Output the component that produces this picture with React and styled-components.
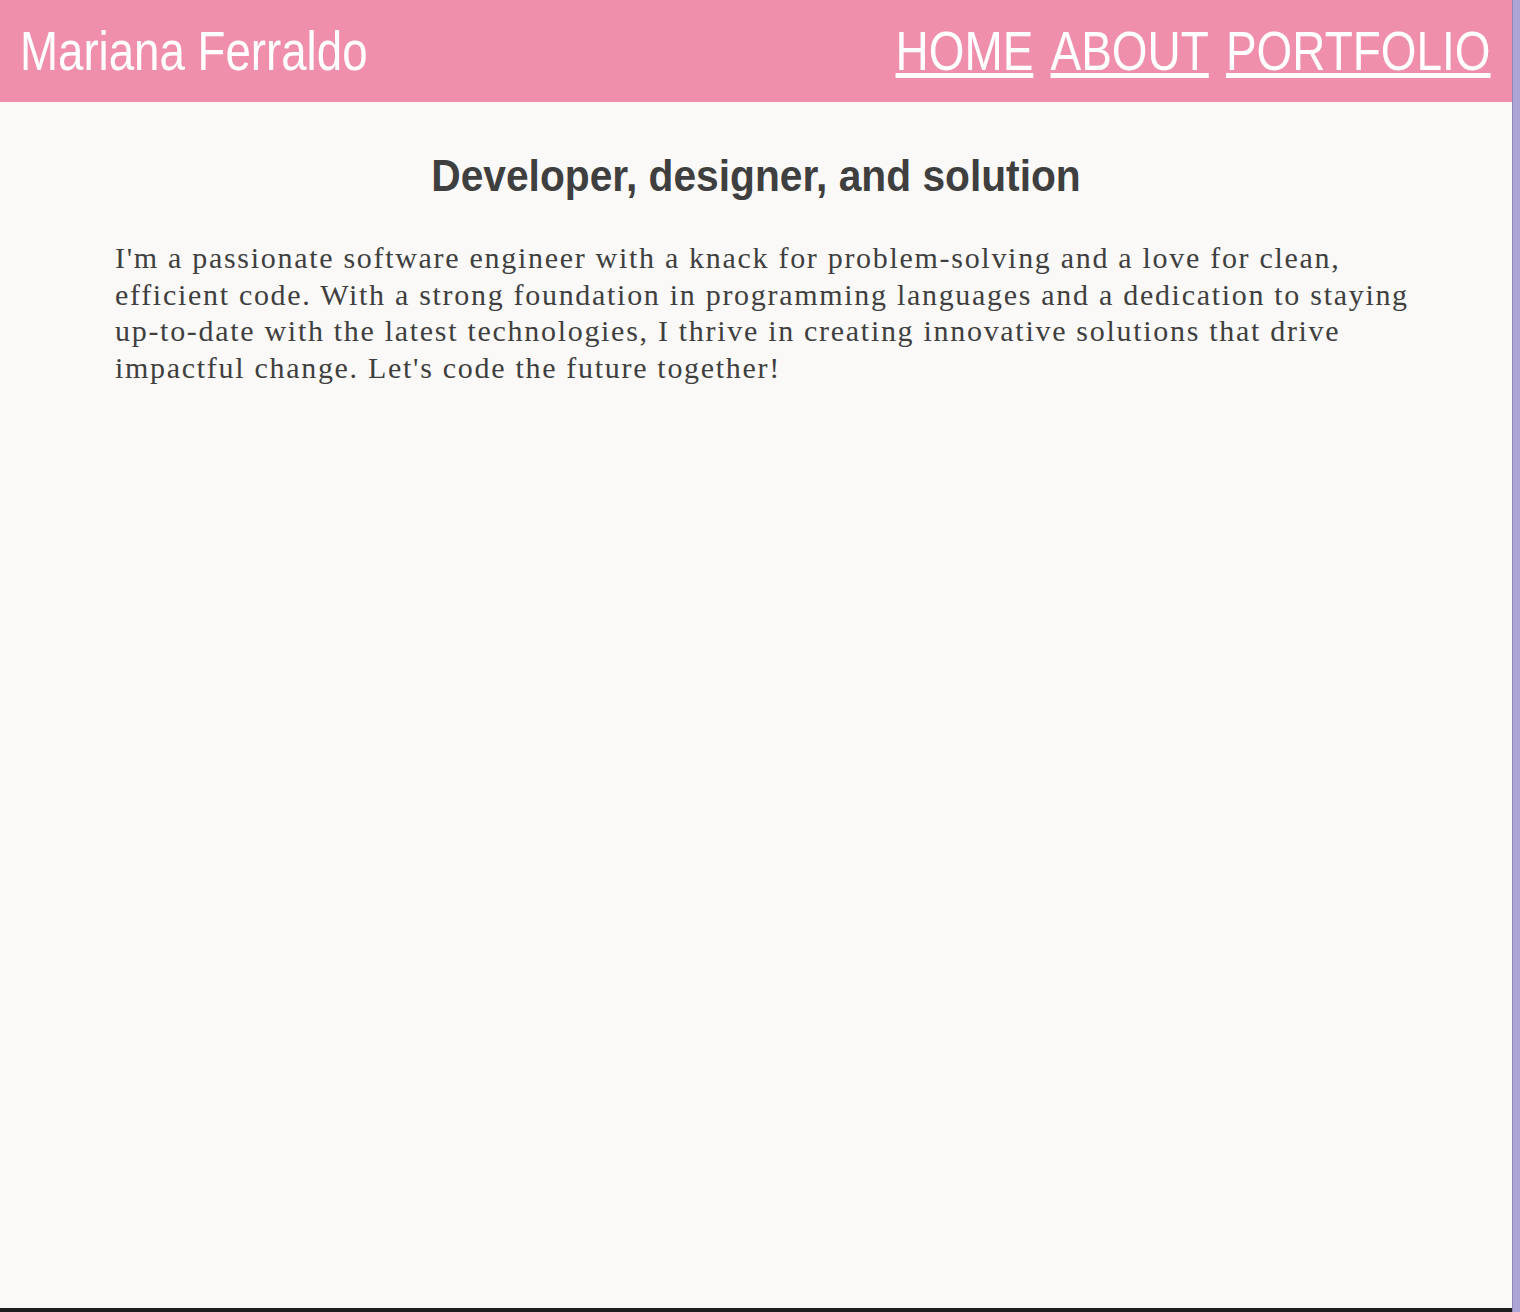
import styled, { createGlobalStyle } from "styled-components"

const GlobalStyle = createGlobalStyle`
  html, body {
    margin: 0;
    padding: 0;
    background: #aca5d3;
  }
`

const Frame = styled.div`
  width: 1512px;
  min-height: 1308px;
  background-color: #faf9f7;
  border-bottom: 4px solid #1e1e1e;
  box-shadow: 1px 0 0 #8e86b8;
  display: flex;
  flex-direction: column;
`

const Header = styled.header`
  height: 102px;
  background-color: #f08fab;
  display: flex;
  align-items: center;
  justify-content: space-between;
  padding: 0 22px 0 20px;
  font-family: "Liberation Sans", Arial, sans-serif;
  color: #ffffff;
`

// no narrow face installed, so squeeze the regular one
const Logo = styled.div`
  font-size: 56px;
  line-height: 1;
  transform: scaleX(0.815);
  transform-origin: left center;
  white-space: nowrap;
`

const Nav = styled.nav`
  display: flex;
  gap: 21px;
  transform: scaleX(0.82);
  transform-origin: right center;
`

const NavLink = styled.a`
  font-size: 56px;
  line-height: 1;
  color: #ffffff;
  text-decoration: underline;
  white-space: nowrap;
`

const Main = styled.main`
  display: flex;
  flex-direction: column;
`

const Title = styled.h1`
  margin: 48px 0 0;
  text-align: center;
  font-family: "Liberation Sans", Arial, sans-serif;
  font-weight: bold;
  font-size: 45px;
  color: #3f3f3f;
  transform: scaleX(0.905);
`

const Intro = styled.p`
  margin: 38px 0 0;
  padding: 0 72px 0 115px;
  font-family: "Liberation Serif", "Times New Roman", serif;
  font-size: 30px;
  line-height: 36.5px;
  letter-spacing: 1.7px;
  color: #3f3f3f;
`

const App = () => {
  return (
    <>
      <GlobalStyle />
      <Frame>
        <Header>
          <Logo>Mariana Ferraldo</Logo>
          <Nav>
            <NavLink href="#">HOME</NavLink>
            <NavLink href="#">ABOUT</NavLink>
            <NavLink href="#">PORTFOLIO</NavLink>
          </Nav>
        </Header>
        <Main>
          <Title>Developer, designer, and solution</Title>
          <Intro>
            I'm a passionate software engineer with a knack for problem-solving and a love for clean,
            efficient code. With a strong foundation in programming languages and a dedication to staying
            up-to-date with the latest technologies, I thrive in creating innovative solutions that drive
            impactful change. Let's code the future together!
          </Intro>
        </Main>
      </Frame>
    </>
  )
}

export default App
